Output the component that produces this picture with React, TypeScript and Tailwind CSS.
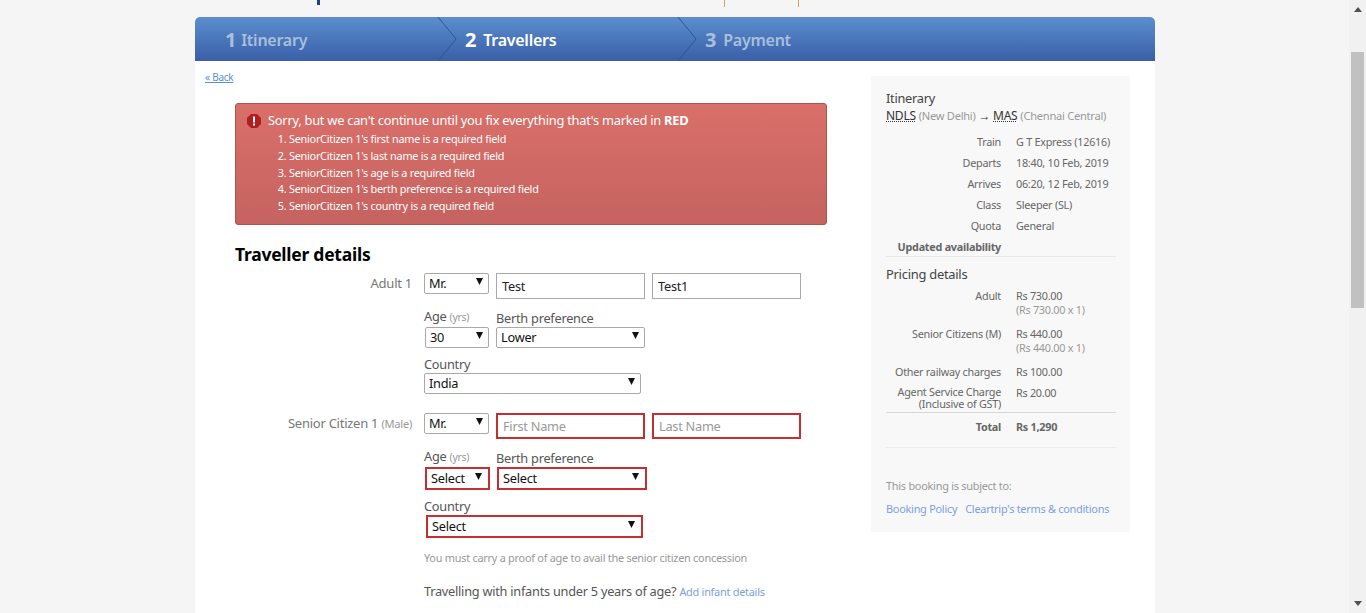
import React from 'react';

const Arrow = () => (
  <svg width="7" height="7" viewBox="0 0 7 7" className="shrink-0 block">
    <path d="M0 0h7L3.5 7z" fill="#111" />
  </svg>
);

function Select({ value, className, error }: { value: string; className: string; error?: boolean }) {
  return (
    <div
      className={`flex items-center justify-between bg-white text-[12.75px] text-[#111] ${
        error ? 'border-2 border-[#c62f2f] pl-[4px] pr-[6px]' : 'border border-[#a9a9a9] rounded-[2px] pl-[4px] pr-[5px]'
      } ${className}`}
    >
      <span>{value}</span>
      <span className="mb-[4px]">
        <Arrow />
      </span>
    </div>
  );
}

function Field({ value, placeholder, error }: { value?: string; placeholder?: string; error?: boolean }) {
  return (
    <input
      readOnly
      value={value}
      placeholder={placeholder}
      className={`w-[149px] h-[26px] bg-white pl-[5px] text-[12.75px] text-[#222] placeholder:text-[#999] outline-none ${
        error ? 'border-2 border-[#c62f2f]' : 'border border-[#a9a9a9]'
      }`}
    />
  );
}

function Traveller({ label, note, error }: { label: string; note?: string; error?: boolean }) {
  return (
    <div className="flex">
      <div className="w-[177px] text-right text-[13px] leading-[20px] text-[#777] shrink-0">
        {label} {note && <span className="text-[11.1px] text-[#999]">{note}</span>}
      </div>
      <div className="ml-[12px]">
        <div className="flex items-start">
          <Select value="Mr." className="w-[65px] h-[21px]" />
          <div className="ml-[7px] flex gap-[7px]">
            <Field value={error ? undefined : 'Test'} placeholder={error ? 'First Name' : undefined} error={error} />
            <Field value={error ? undefined : 'Test1'} placeholder={error ? 'Last Name' : undefined} error={error} />
          </div>
        </div>
        <div className="flex mt-[11px]">
          <div className="w-[72px]">
            <div className="h-[17px] text-[12.75px] leading-[12px] text-[#555]">
              Age <span className="text-[10.5px] text-[#999]">(yrs)</span>
            </div>
            {error ? (
              <Select value="Select" error className="ml-[1px] w-[65px] h-[23px]" />
            ) : (
              <Select value="30" className="ml-[1px] w-[64px] h-[21px]" />
            )}
          </div>
          <div>
            <div className="h-[17px] text-[12.75px] leading-[16px] text-[#555]">Berth preference</div>
            {error ? (
              <Select value="Select" error className="ml-[1px] w-[150px] h-[23px]" />
            ) : (
              <Select value="Lower" className="w-[149px] h-[21px]" />
            )}
          </div>
        </div>
        <div className="mt-[8px]">
          <div className="h-[17px] text-[12.75px] leading-[16px] text-[#555]">Country</div>
          {error ? (
            <Select value="Select" error className="ml-[2px] w-[217px] h-[23px]" />
          ) : (
            <Select value="India" className="w-[217px] h-[21px]" />
          )}
        </div>
      </div>
    </div>
  );
}

function Row({ label, value, sub, bold }: { label: React.ReactNode; value?: string; sub?: string; bold?: boolean }) {
  return (
    <div className={`flex text-[10.8px] leading-[14px] text-[#666] ${bold ? 'font-bold text-[#555]' : ''}`}>
      <div className="w-[115px] text-right shrink-0">{label}</div>
      <div className="ml-[15px]">
        <div>{value}</div>
        {sub && <div className="text-[#999]">{sub}</div>}
      </div>
    </div>
  );
}

function Step({ n, title, active, gap }: { n: string; title: string; active?: boolean; gap: string }) {
  return (
    <div className="relative w-[240px] h-full flex items-center pl-[30px] pt-[2px]">
      <span className={`text-[20px] font-bold ${gap} ${active ? 'text-white' : 'text-[#a9bfdc]'}`}>{n}</span>
      <span className={`text-[16px] font-semibold ${active ? 'text-white' : 'text-[#a9bfdc]'}`}>{title}</span>
      <svg width="22" height="44" viewBox="0 0 22 44" className="absolute right-[-24px] top-0">
        <path d="M1 0l18 22L1 44" fill="none" stroke="#2f5596" strokeWidth="1" />
      </svg>
    </div>
  );
}

const errors = [
  "SeniorCitizen 1's first name is a required field",
  "SeniorCitizen 1's last name is a required field",
  "SeniorCitizen 1's age is a required field",
  "SeniorCitizen 1's berth preference is a required field",
  "SeniorCitizen 1's country is a required field",
];

export default function App() {
  return (
    <div className="flex h-[613px] overflow-hidden bg-[#f5f5f5] font-['Noto_Sans','Open_Sans',sans-serif] tracking-[-0.25px]">
      <div className="w-[1349px] shrink-0">
        {/* header remains, scrolled off */}
        <div className="h-[17px] ml-[195px] w-[960px] relative">
          <div className="absolute left-[122px] top-0 w-[3px] h-[5px] bg-[#1d3f94]" />
          <div className="absolute left-[529px] top-0 w-px h-[7px] bg-[#c9a27a]" />
          <div className="absolute left-[603px] top-0 w-px h-[7px] bg-[#d9a060]" />
        </div>

        <div className="ml-[195px] w-[960px] h-[596px] bg-white">
          <div className="h-[44px] flex rounded-t-[5px] bg-gradient-to-b from-[#5b8ecf] to-[#3a5fa6] overflow-hidden">
            <Step n="1" title="Itinerary" gap="mr-[5px]" />
            <Step n="2" title="Travellers" active gap="mr-[7px]" />
            <div className="w-[240px] h-full flex items-center pl-[30px] pt-[2px]">
              <span className="text-[20px] font-bold mr-[7px] text-[#a9bfdc]">3</span>
              <span className="text-[16px] font-semibold text-[#a9bfdc]">Payment</span>
            </div>
          </div>

          <div className="flex">
            <div className="w-[676px] shrink-0">
              <a className="block mt-[9px] ml-[10px] h-[15px] text-[10px] leading-[15px] text-[#5b8fd0] underline">
                « Back
              </a>
              <div className="ml-[40px] mt-[18px] w-[592px] h-[122px] rounded-[3px] border border-[#a9574f] bg-gradient-to-b from-[#da6f69] to-[#c56360] text-white">
                <div className="flex items-center mt-[8px] ml-[11px] h-[17px]">
                  <svg width="14" height="14" viewBox="0 0 14 14">
                    <path d="M4 0h6l4 4v6l-4 4H4l-4-4V4z" fill="#b01f1f" />
                    <rect x="6" y="2.5" width="2" height="6" fill="#fff" />
                    <rect x="6" y="9.5" width="2" height="2" fill="#fff" />
                  </svg>
                  <span className="ml-[7px] text-[12.85px]">
                    Sorry, but we can't continue until you fix everything that's marked in <b>RED</b>
                  </span>
                </div>
                <ol className="list-decimal ml-[53px] mt-[2px] text-[10.85px] leading-[16.8px]">
                  {errors.map(e => (
                    <li key={e}>{e}</li>
                  ))}
                </ol>
              </div>

              <h2 className="ml-[40px] mt-[18px] h-[24px] text-[17.5px] leading-[23px] font-bold text-black">Traveller details</h2>

              <div className="mt-[6px] ml-[40px]">
                <Traveller label="Adult 1" />
                <div className="mt-[19px]">
                  <Traveller label="Senior Citizen 1" note="(Male)" error />
                </div>
                <div className="ml-[189px]">
                  <p className="mt-[13px] text-[10.9px] leading-[14px] text-[#999]">
                    You must carry a proof of age to avail the senior citizen concession
                  </p>
                  <p className="mt-[17px] text-[12.75px] leading-[18px] text-[#555]">
                    Travelling with infants under 5 years of age?{' '}
                    <span className="text-[10.9px] text-[#7b9fe0]">Add infant details</span>
                  </p>
                </div>
              </div>
            </div>

            <aside className="mt-[15px] w-[259px] h-[456px] bg-[#f8f8f8] px-[15px] pt-[14px]">
              <div className="h-[17px] text-[12.75px] leading-[16px] text-[#444]">Itinerary</div>
              <div className="text-[12px] leading-[17px] text-[#333] whitespace-nowrap">
                <span className="underline decoration-dotted">NDLS</span>{' '}
                <span className="text-[11.1px] text-[#999]">(New Delhi)</span> →{' '}
                <span className="underline decoration-dotted">MAS</span>{' '}
                <span className="text-[11.1px] text-[#999]">(Chennai Central)</span>
              </div>
              <div className="mt-[11px] flex flex-col gap-[7px]">
                <Row label="Train" value="G T Express (12616)" />
                <Row label="Departs" value="18:40, 10 Feb, 2019" />
                <Row label="Arrives" value="06:20, 12 Feb, 2019" />
                <Row label="Class" value="Sleeper (SL)" />
                <Row label="Quota" value="General" />
                <Row label="Updated availability" bold />
              </div>
              <div className="mt-[2px] h-px w-[230px] bg-[#e8e8e8]" />
              <div className="mt-[9px] text-[12.9px] leading-[16px] text-[#444]">Pricing details</div>
              <div className="mt-[7px] flex flex-col gap-[10px]">
                <Row label="Adult" value="Rs 730.00" sub="(Rs 730.00 x 1)" />
                <Row label="Senior Citizens (M)" value="Rs 440.00" sub="(Rs 440.00 x 1)" />
              </div>
              <div className="mt-[10px]">
                <Row label="Other railway charges" value="Rs 100.00" />
              </div>
              <div className="mt-[7px]">
                <Row
                  label={
                    <span className="block leading-[12px]">
                      Agent Service Charge
                      <br />
                      (Inclusive of GST)
                    </span>
                  }
                  value="Rs 20.00"
                />
              </div>
              <div className="mt-[2px] h-px w-[230px] bg-[#d8d8d8]" />
              <div className="mt-[7px]">
                <Row label="Total" value="Rs 1,290" bold />
              </div>
              <div className="mt-[13px] h-px w-[230px] bg-[#ececec]" />
              <p className="mt-[31px] text-[10.9px] leading-[14px] text-[#999]">This booking is subject to:</p>
              <div className="mt-[9px] flex gap-[8px] text-[10.9px] leading-[14px] text-[#7b9fe0] whitespace-nowrap">
                <a>Booking Policy</a>
                <a>Cleartrip's terms &amp; conditions</a>
              </div>
            </aside>
          </div>
        </div>
      </div>

      {/* scrollbar */}
      <div className="w-[17px] h-full bg-[#f1f1f1] flex flex-col items-center justify-between shrink-0 relative">
        <svg width="8" height="5" viewBox="0 0 8 5" className="mt-[7px]">
          <path d="M0 5h8L4 0z" fill="#505050" />
        </svg>
        <div className="absolute left-[2px] top-[52px] w-[13px] h-[256px] bg-[#c1c1c1]" />
        <svg width="8" height="5" viewBox="0 0 8 5" className="mb-[7px]">
          <path d="M0 0h8L4 5z" fill="#505050" />
        </svg>
      </div>
    </div>
  );
}
